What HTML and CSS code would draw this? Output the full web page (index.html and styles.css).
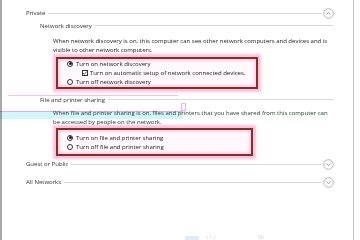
FILE: index.html
```html
<!DOCTYPE html>
<html lang="en">
<head>
    <meta charset="UTF-8">
    <meta name="viewport" content="width=device-width, initial-scale=1.0">
    <title>Advanced sharing settings</title>
    <link rel="stylesheet" href="styles.css">
</head>
<body>

<div class="window">
    <section class="group">
        <div class="group-head">
            <span class="title">Private</span>
            <span class="rule"></span>
            <span class="chev">
                <svg width="11" height="11" viewBox="0 0 11 11"><circle cx="5.5" cy="5.5" r="4.8" fill="none" stroke="#a4a4a4" stroke-width="0.8"/><path d="M3.6 6.4 L5.5 4.5 L7.4 6.4" fill="none" stroke="#7a7a7a" stroke-width="0.8"/></svg>
            </span>
        </div>

        <div class="sub">
            <div class="sub-head"><span class="title">Network discovery</span><span class="rule"></span></div>
            <p class="desc">When network discovery is on, this computer can see other network computers and devices and is<br>visible to other network computers.</p>
            <div class="options box-one">
                <div class="opt"><span class="radio on"></span>Turn on network discovery</div>
                <div class="opt nested">
                    <span class="check">
                        <svg width="6" height="6" viewBox="0 0 6 6"><path d="M1.2 3.1 L2.5 4.4 L4.9 1.5" fill="none" stroke="#222" stroke-width="0.8"/></svg>
                    </span>Turn on automatic setup of network connected devices.
                </div>
                <div class="opt"><span class="radio"></span>Turn off network discovery</div>
            </div>
        </div>

        <div class="sub file">
            <div class="sub-head"><span class="title">File and printer sharing</span><span class="rule"></span></div>
            <p class="desc">When file and printer sharing is on, files and printers that you have shared from this computer can<br>be accessed by people on the network.</p>
            <div class="options box-two">
                <div class="opt"><span class="radio on"></span>Turn on file and printer sharing</div>
                <div class="opt"><span class="radio"></span>Turn off file and printer sharing</div>
            </div>
        </div>
    </section>

    <section class="group closed">
        <div class="group-head">
            <span class="title">Guest or Public</span>
            <span class="rule"></span>
            <span class="chev">
                <svg width="11" height="11" viewBox="0 0 11 11"><circle cx="5.5" cy="5.5" r="4.8" fill="none" stroke="#a4a4a4" stroke-width="0.8"/><path d="M3.6 4.6 L5.5 6.5 L7.4 4.6" fill="none" stroke="#7a7a7a" stroke-width="0.8"/></svg>
            </span>
        </div>
    </section>

    <section class="group closed last">
        <div class="group-head">
            <span class="title">All Networks</span>
            <span class="rule"></span>
            <span class="chev">
                <svg width="11" height="11" viewBox="0 0 11 11"><circle cx="5.5" cy="5.5" r="4.8" fill="none" stroke="#a4a4a4" stroke-width="0.8"/><path d="M3.6 4.6 L5.5 6.5 L7.4 4.6" fill="none" stroke="#7a7a7a" stroke-width="0.8"/></svg>
            </span>
        </div>
    </section>

    <div class="footer">
        <span class="shield"></span>
        <span class="faint">\ \ \</span>
        <span class="faint far">&#8470;</span>
    </div>

    <!-- selection leftovers from the original capture -->
    <div class="mark-line"></div>
    <div class="mark-band"></div>
    <div class="mark-dot"></div>
</div>

</body>
</html>
```

FILE: styles.css
```css
body {
    margin: 0;
    background-color: #fff;
    font-family: "Open Sans", "Noto Sans", sans-serif;
    font-size: 6px;
    color: #1a1a1a;
}
.window {
    position: relative;
    box-sizing: border-box;
    width: 354px;
    height: 240px;
    border-left: 2px solid #a9a9a9;
    border-right: 1px solid #c4c4c4;
    display: flex;
    flex-direction: column;
    padding-right: 19px;
}
.group-head {
    display: flex;
    align-items: center;
    height: 10px;
    padding-left: 24px;
    margin-top: 8px;
    color: #333;
}
.group.closed .group-head {
    margin-top: 3px;
}
.group.last .group-head {
    margin-top: 8px;
}
.rule {
    flex: 1;
    height: 1px;
    background-color: #d9d9d9;
    margin-left: 3px;
}
.chev {
    display: flex;
    margin-left: 2px;
}
.sub-head {
    display: flex;
    align-items: center;
    height: 9px;
    padding-left: 38px;
    margin-top: 3px;
    color: #333;
}
.sub.file .sub-head {
    margin-top: 6px;
}
.desc {
    margin: 7px 0 2px 51px;
    line-height: 9px;
    white-space: nowrap;
}
.sub.file .desc {
    margin-top: 5px;
    margin-bottom: 1px;
    color: #173a22;
}
.options {
    margin-left: 54px;
    border: 2px solid #8c2e1e;
    box-shadow: 0 0 2px 3px #fbc2e0, inset 0 0 2px 2px #fcd2e8;
    background-color: #fff8fc;
}
.box-one {
    width: 198px;
    padding: 0 0 1px 0;
}
.box-two {
    width: 193px;
    padding: 3px 0;
}
.opt {
    display: flex;
    align-items: center;
    height: 9px;
    padding-left: 9px;
    white-space: nowrap;
}
.opt.nested {
    padding-left: 24px;
}
.radio {
    box-sizing: border-box;
    width: 6px;
    height: 6px;
    border: 0.8px solid #333;
    border-radius: 50%;
    margin-right: 3px;
    display: flex;
    align-items: center;
    justify-content: center;
    background-color: #fff;
}
.radio.on::after {
    content: "";
    width: 3px;
    height: 3px;
    border-radius: 50%;
    background-color: #222;
}
.check {
    box-sizing: border-box;
    width: 6px;
    height: 6px;
    border: 0.8px solid #333;
    margin-right: 2px;
    display: flex;
    background-color: #fff;
}
.check svg {
    margin: -0.8px;
}
.footer {
    margin-top: auto;
    height: 6px;
    display: flex;
    align-items: flex-end;
    padding-left: 183px;
    color: #d4d4d4;
    font-size: 6px;
}
.shield {
    width: 14px;
    height: 4px;
    background-color: #e3eaf6;
}
.faint {
    margin-left: 7px;
    line-height: 6px;
}
.faint.far {
    margin-left: 42px;
}
.mark-line {
    position: absolute;
    left: 6px;
    top: 95px;
    width: 170px;
    height: 1px;
    background-color: #f4c4ec;
}
.mark-band {
    position: absolute;
    left: -2px;
    top: 111px;
    width: 183px;
    height: 7px;
    background-color: #d2f7fa;
    border-top: 1px solid #f2a6dc;
    mix-blend-mode: multiply;
}
.mark-dot {
    position: absolute;
    left: 179px;
    top: 103px;
    width: 3px;
    height: 6px;
    border: 1px solid #f0b4e6;
}
```
